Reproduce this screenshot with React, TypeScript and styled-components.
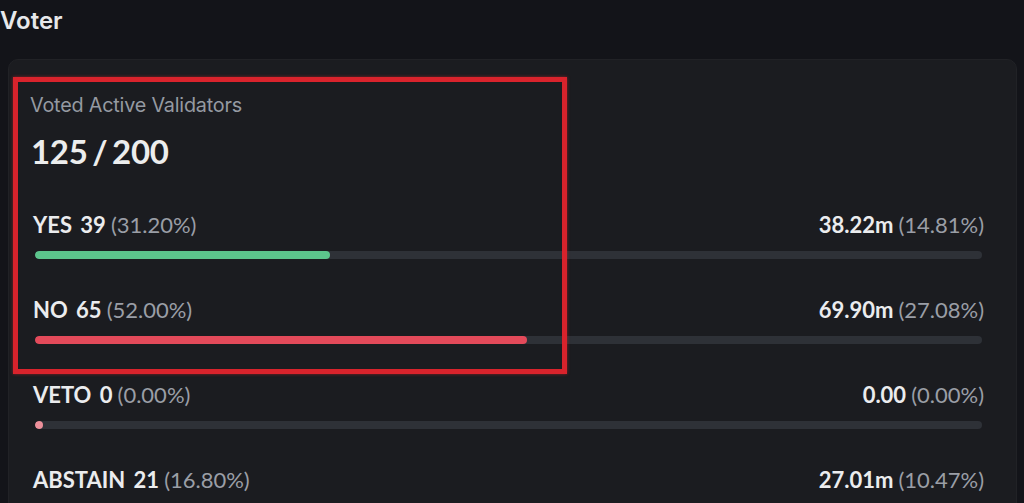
import styled, { createGlobalStyle } from "styled-components";

const rows = [
  { label: "YES", count: 39, pct: 31.2, amount: "38.22m", share: "14.81%", color: "#5cc48c" },
  { label: "NO", count: 65, pct: 52.0, amount: "69.90m", share: "27.08%", color: "#e44a5a" },
  { label: "VETO", count: 0, pct: 0, amount: "0.00", share: "0.00%", color: "#ec8f9a" },
  { label: "ABSTAIN", count: 21, pct: 16.8, amount: "27.01m", share: "10.47%", color: "#8a8f99" },
];

const GlobalStyle = createGlobalStyle`
  html, body {
    margin: 0;
    background: #131419;
    overflow: hidden;
  }
`;

const Page = styled.div`
  height: 503px;
  font-family: "Lato", "Noto Sans", sans-serif;
`;

const Title = styled.h2`
  margin: 0;
  padding: 6px 0 0 0;
  font-family: "Inter", sans-serif;
  font-size: 24px;
  font-weight: 600;
  line-height: 30px;
  color: #e7e8ea;
`;

const Card = styled.section`
  position: relative;
  margin: 23px 7px 0 8px;
  padding: 33px 32px 40px 24px;
  background: #1b1c20;
  border: 1px solid #212226;
  border-radius: 10px;
`;

const Caption = styled.div`
  font-family: "Inter", sans-serif;
  font-size: 19.8px;
  line-height: 24px;
  letter-spacing: -0.2px;
  color: #959aa2;
  margin-left: -3px;
`;

const Count = styled.div`
  margin-top: 14px;
  font-size: 33px;
  font-weight: 700;
  line-height: 40px;
  letter-spacing: -0.3px;
  word-spacing: -3px;
  color: #eceded;
  margin-left: -2px;
`;

const Rows = styled.div`
  margin-top: 40px;
  display: flex;
  flex-direction: column;
  gap: 37px;
`;

const Row = styled.div`
  display: flex;
  flex-direction: column;
  gap: 12px;
`;

const RowHead = styled.div`
  display: flex;
  justify-content: space-between;
  font-size: 22px;
  line-height: 28px;
`;

const Strong = styled.span`
  font-weight: 700;
  word-spacing: 3px;
  color: #ebecee;
`;

const Muted = styled.span`
  color: #9a9ea6;
  margin-left: 5px;
`;

const Track = styled.div`
  height: 8px;
  margin: 0 2px;
  border-radius: 4px;
  background: #2e3137;
  overflow: hidden;
`;

const Fill = styled.div<{ $color: string }>`
  height: 100%;
  min-width: 8px;
  border-radius: 4px;
  background: ${(p) => p.$color};
`;

const Highlight = styled.div`
  position: absolute;
  left: 4px;
  top: 17px;
  width: 544px;
  height: 287px;
  border: 5px solid #d9232c;
  box-shadow: 0 0 3px rgba(217, 35, 44, 0.6);
  pointer-events: none;
`;

export default function App() {
  return (
    <Page>
      <GlobalStyle />
      <Title>Voter</Title>
      <Card>
        <Caption>Voted Active Validators</Caption>
        <Count>125 / 200</Count>
        <Rows>
          {rows.map((r) => (
            <Row key={r.label}>
              <RowHead>
                <span>
                  <Strong>
                    {r.label} {r.count}
                  </Strong>
                  <Muted>({r.pct.toFixed(2)}%)</Muted>
                </span>
                <span>
                  <Strong>{r.amount}</Strong>
                  <Muted>({r.share})</Muted>
                </span>
              </RowHead>
              <Track>
                <Fill $color={r.color} style={{ width: `${r.pct}%` }} />
              </Track>
            </Row>
          ))}
        </Rows>
        <Highlight />
      </Card>
    </Page>
  );
}
